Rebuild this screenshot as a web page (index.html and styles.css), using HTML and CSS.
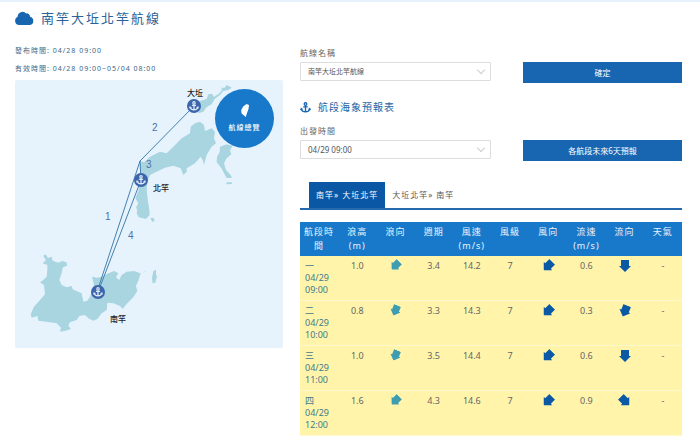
FILE: index.html
```
<!DOCTYPE html>
<html lang="zh-Hant">
<head>
<meta charset="utf-8">
<meta name="viewport" content="width=device-width, initial-scale=1">
<title>南竿大坵北竿航線</title>
<link rel="stylesheet" href="styles.css">
</head>
<body>
<svg class="defs" aria-hidden="true">
  <symbol id="arrow" viewBox="0 0 12 12"><path d="M2 0h8v6h2L6 12 0 6h2z"/></symbol>
  <symbol id="anchor" viewBox="0 0 24 24">
    <g fill="none" stroke="currentColor" stroke-width="3">
      <circle cx="12" cy="4.5" r="2.8"/>
      <path d="M12 7.5V21M7 10.5h10M3 15.5c1 4 4.500 6 9 6s8-2 9-6"/>
    </g>
    <path fill="currentColor" d="M0 18l2-6 5 4zM24 18l-2-6-5 4z"/>
  </symbol>
</svg>
<main class="page">
  <section class="route">
    <h1 class="title">
      <svg class="cloud" viewBox="0 0 19 14" aria-hidden="true"><path d="M4.500 14A4.300 4.300 0 0 1 2.600 5.800 5 5 0 0 1 11.200 2.400 3.200 3.200 0 0 1 15 5.800 4.200 4.200 0 0 1 15 14z"/></svg>
      南竿大坵北竿航線
    </h1>
    <p class="meta">發布時間: 04/28 09:00</p>
    <p class="meta">有效時間: 04/28 09:00~05/04 08:00</p>
    <div class="map">
      <svg class="map-art" viewBox="15 80 268 268" role="img" aria-label="航線圖">
        <g class="land" transform="translate(140 75) scale(.3333)">
          <path d="M0 258L12 262 30 245 60 230 80 235 100 215 125 190 150 175 152 155 165 145 180 140 192 150 195 168 215 160 225 170 222 190 228 205 215 215 200 240 192 270 188 255 182 245 165 265 140 280 140 290 130 300 122 280 100 272 75 278 50 290 30 300 22 320 20 345 24 380 28 405 29 420 18 432-4 427-10 415-8 405-12 398-5 385-14 370-4 345 0 325z"/>
          <path d="M172 95L180 78 200 72 205 58 216 56 222 66 238 55 246 45 244 38 254 38 260 30 275 38 265 45 250 48 240 60 224 72 215 88 200 96 190 110 176 115z"/>
          <path d="M240 215l20-7 18 4-8 14 4 12-14 12-8 15 6 20 14 15 4 8-16 1-8-14-8-16-14-17 1-17 8-14zM259 322l16 0 1 5-16 1zM31 430l9-2 5 9-8 4z"/>
        </g>
        <g class="land" transform="translate(10 210) scale(.3333)">
          <path d="M108 135l6 9 11-4 3 12 17 6 12-5 12 4 3 9-14 7-3 17-7 20 7 15 15 7 15-4 3 10 27 12 5 25 12-3 8-12 8-20 4-15-6-25 16 3 13-3 15-8 22-9 13 7-7 12 10 8 7-15 15-10 22-2 20 7-7 22-7 16 4 15-12 19-20 20-12 15-8-9-20-8-18-2-2 22-15 10-13 17-12 5-15-7-10-10-17 3-8 12-20 7-5 10 8 10-18 6-15 2 3-12-13-13-20-3-35-5-3-14-17 5-3-10 10-23 18-20 15-17-3-28-12-8 10-7 10-10 2-20v-15l-14-5 10-10-8-12 5-5zM430 183l8-4 0 15 3 4-5 20-8 2-2-16zM400 188l9-7-4 5z"/>
        </g>
        <g class="path">
          <path d="M97 292L140 161 194 106M140 161l1 19L98 292"/>
        </g>
        <g class="pins">
          <circle cx="194" cy="106" r="7"/><circle cx="141" cy="180" r="7"/><circle cx="98" cy="292" r="7"/>
          <use href="#anchor" x="189" y="101" width="10" height="10"/>
          <use href="#anchor" x="136" y="175" width="10" height="10"/>
          <use href="#anchor" x="93" y="287" width="10" height="10"/>
        </g>
        <g class="legs">
          <text x="152" y="131">2</text><text x="146" y="168">3</text><text x="105" y="220">1</text><text x="128" y="239">4</text>
        </g>
        <g class="ports">
          <text x="187" y="96">大坵</text><text x="153" y="191">北竿</text><text x="110" y="322">南竿</text>
        </g>
      </svg>
      <button class="overview" type="button">
        <svg class="taiwan" viewBox="0 0 8 13" aria-hidden="true"><path d="M5.500 0L8 1 7.500 5 6 9 4.800 13 3 11.500 .6 9.500 .2 6 2.200 2.500z"/></svg>
        航線總覽
      </button>
    </div>
  </section>

  <section class="forecast">
    <form class="query">
      <div class="field">
        <label for="route">航線名稱</label>
        <span class="picker"><select id="route"><option>南竿大坵北竿航線</option></select></span>
      </div>
      <button class="action" type="button">確定</button>
    </form>
    <h2 class="subtitle"><svg class="anchor" aria-hidden="true"><use href="#anchor"/></svg>航段海象預報表</h2>
    <form class="query">
      <div class="field">
        <label for="departure">出發時間</label>
        <span class="picker"><select id="departure" class="time"><option>04/29 09:00</option></select></span>
      </div>
      <button class="action" type="button">各航段未來6天預報</button>
    </form>
    <nav class="tabs">
      <a class="tab active" href="#forward">南竿» 大坵北竿</a>
      <a class="tab" href="#return">大坵北竿» 南竿</a>
    </nav>
    <table class="data">
      <thead>
        <tr><th>航段時間</th><th>浪高<br>(m)</th><th>浪向</th><th>週期</th><th>風速<br>(m/s)</th><th>風級</th><th>風向</th><th>流速<br>(m/s)</th><th>流向</th><th>天氣</th></tr>
      </thead>
      <tbody>
        <tr><th scope="row">一<br>04/29<br>09:00</th><td>1.0</td><td><svg class="arrow wave sw"><use href="#arrow"/></svg></td><td>3.4</td><td>14.2</td><td>7</td><td><svg class="arrow sw"><use href="#arrow"/></svg></td><td>0.6</td><td><svg class="arrow"><use href="#arrow"/></svg></td><td>-</td></tr>
        <tr><th scope="row">二<br>04/29<br>10:00</th><td>0.8</td><td><svg class="arrow wave ssw"><use href="#arrow"/></svg></td><td>3.3</td><td>14.3</td><td>7</td><td><svg class="arrow sw"><use href="#arrow"/></svg></td><td>0.3</td><td><svg class="arrow ssw"><use href="#arrow"/></svg></td><td>-</td></tr>
        <tr><th scope="row">三<br>04/29<br>11:00</th><td>1.0</td><td><svg class="arrow wave ssw"><use href="#arrow"/></svg></td><td>3.5</td><td>14.4</td><td>7</td><td><svg class="arrow sw"><use href="#arrow"/></svg></td><td>0.6</td><td><svg class="arrow"><use href="#arrow"/></svg></td><td>-</td></tr>
        <tr><th scope="row">四<br>04/29<br>12:00</th><td>1.6</td><td><svg class="arrow wave sw"><use href="#arrow"/></svg></td><td>4.3</td><td>14.6</td><td>7</td><td><svg class="arrow sw"><use href="#arrow"/></svg></td><td>0.9</td><td><svg class="arrow se"><use href="#arrow"/></svg></td><td>-</td></tr>
      </tbody>
    </table>
  </section>
</main>
</body>
</html>
```
FILE: styles.css
```
* { box-sizing: border-box; }

body {
  margin: 0;
  border-top: 2px solid #e5f2fd;
  background: #fff;
  color: #666;
  font: 9px/12px "Noto Sans", "Noto Sans CJK TC", sans-serif;
}

h1, h2, p { margin: 0; font-weight: 400; }
button, select { font: inherit; }
.defs { position: absolute; width: 0; height: 0; }

.page {
  display: grid;
  grid-template-columns: 268fr 382fr;
  gap: 17px;
  padding: 0 18px 11px 15px;
}

/* Route summary and map */
.title {
  display: flex;
  align-items: center;
  gap: 7px;
  height: 32px;
  margin-bottom: 8px;
  color: #2a6397;
  font-size: 13px;
  letter-spacing: 2px;
}
.cloud { width: 19px; height: 14px; fill: #1866b2; }
.meta {
  height: 18px;
  color: #39688a;
  font-size: 7px;
  line-height: 18px;
  letter-spacing: 1px;
}
.map {
  position: relative;
  margin-top: 2px;
  border-radius: 2px;
  background: #e6f3fd;
}
.map-art { display: block; width: 100%; }
.land { fill: #a9d5e1; }
.path { fill: none; stroke: #4480ae; stroke-width: 1; }
.pins { fill: #3c65ab; color: #dce9f7; }
.legs { fill: #4c71a8; font: 10px "Liberation Sans", sans-serif; }
.ports { fill: #222; font: 500 8px "Noto Sans CJK TC", sans-serif; }
.overview {
  position: absolute;
  top: 9px;
  right: 9px;
  display: flex;
  flex-direction: column;
  align-items: center;
  justify-content: center;
  gap: 5px;
  width: 59px;
  height: 59px;
  padding: 0;
  border: 0;
  border-radius: 50%;
  background: #1879ca;
  color: #fff;
  font-size: 7px;
  font-weight: 500;
  letter-spacing: 1px;
}
.taiwan { width: 8px; height: 13px; fill: #fff; }

/* Query forms */
.forecast { padding-top: 45px; }
.query {
  display: grid;
  grid-template-columns: 191fr 159fr;
  gap: 32px;
  align-items: end;
}
.field { display: grid; gap: 3px; }
.field label { font-size: 8px; letter-spacing: 1px; }
.picker { position: relative; display: block; height: 21px; }
.picker::after {
  content: "";
  position: absolute;
  top: 5px;
  right: 7px;
  width: 5px;
  height: 5px;
  border: solid #ccc;
  border-width: 0 1px 1px 0;
  transform: rotate(45deg);
}
.picker select {
  width: 100%;
  height: 19px;
  padding: 0 7px;
  border: 1px solid #ddd;
  border-radius: 1px;
  appearance: none;
  background: #fff;
  color: #555;
  font-size: 7px;
  vertical-align: top;
}
.picker .time { font-size: 8px; }
.action {
  height: 21px;
  padding: 0;
  border: 0;
  background: #1866b2;
  color: #fff;
  font-size: 8px;
}
.subtitle {
  display: flex;
  align-items: center;
  gap: 7px;
  height: 24px;
  margin: 12px 0 6px;
  color: #2267a9;
  font-size: 10px;
  letter-spacing: 1px;
}
.anchor { width: 11px; height: 11px; color: #1866b2; }

/* Segment tabs */
.tabs {
  display: flex;
  margin: 21px 0 12px;
  padding-left: 9px;
  border-bottom: 2px solid #2468ae;
}
.tab {
  padding: 0 7px;
  color: #555;
  font-size: 8px;
  line-height: 26px;
  letter-spacing: 1px;
  text-decoration: none;
}
.tab.active { background: #0a57a5; color: #fff; }

/* Forecast table */
.data {
  width: 100%;
  border-collapse: collapse;
  table-layout: fixed;
}
.data th, .data td { font-weight: 400; text-align: center; vertical-align: top; }
.data thead th {
  padding: 3px 4px;
  background: #1879ca;
  color: #e9f4fd;
  line-height: 14px;
  letter-spacing: 1px;
}
.data tbody tr { background: #fff4aa; border-bottom: 1px solid #fff8cc; }
.data tbody th, .data tbody td { padding: 4px 2px; }
.data tbody th { padding-left: 5px; color: #417b8b; text-align: left; }
.arrow { display: block; width: 12px; height: 12px; margin: 0 auto; fill: #0b58a4; }
.wave { width: 11px; height: 11px; fill: #3e9db0; }
.sw { transform: rotate(45deg); }
.ssw { transform: rotate(22deg); }
.se { transform: rotate(-45deg); }
```
